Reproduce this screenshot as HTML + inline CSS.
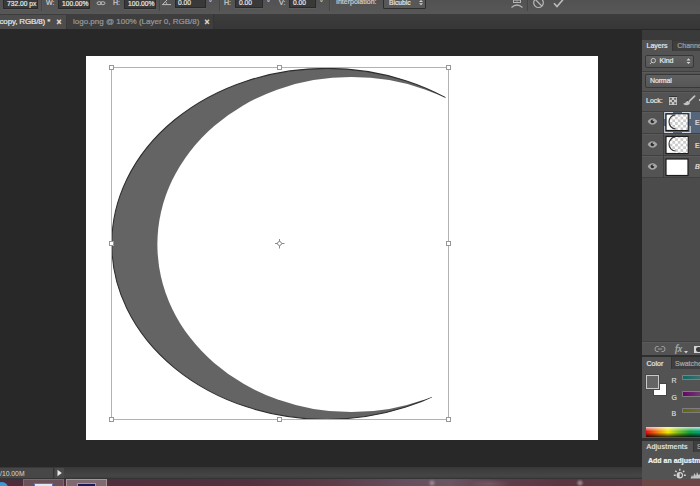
<!DOCTYPE html>
<html><head><meta charset="utf-8">
<style>
*{margin:0;padding:0;box-sizing:border-box}
html,body{width:700px;height:486px;overflow:hidden;background:#282828;font-family:"Liberation Sans",sans-serif;position:relative}
.a{position:absolute}
.t{position:absolute;white-space:nowrap;color:#e6e6e6;font-size:7px;line-height:7px;-webkit-text-stroke:0.2px currentColor}
.fld{position:absolute;top:-4px;height:12px;background:#393939;border:1px solid #2a2a2a;box-shadow:0 1px 0 #5c5c5c}
.sep{position:absolute;top:0;width:1px;height:11px;background:#454545;box-shadow:1px 0 0 #575757}
.hs{position:absolute;left:642px;width:58px;height:1px;background:#404040;box-shadow:0 1px 0 #5a5a5a}
.lab{color:#cfcfcf}
</style></head><body>
<!-- options bar -->
<div class="a" style="left:0;top:0;width:700px;height:14px;background:linear-gradient(#525252,#575757)"></div>
<div class="fld" style="left:3px;width:35px;top:-3px"></div>
<div class="t" style="left:7px;top:0.2px;font-size:6.7px">732.00 px</div>
<div class="sep" style="left:41px"></div>
<div class="t lab" style="left:46px;top:-1.5px">W:</div>
<div class="fld" style="left:58px;width:32px;top:-3px"></div>
<div class="t" style="left:62px;top:0.2px;font-size:6.7px">100.00%</div>
<svg class="a" style="left:96px;top:0" width="10" height="7" viewBox="0 0 10 7"><g fill="none" stroke="#c4c4c4" stroke-width="0.9"><ellipse cx="3.2" cy="3.2" rx="2.2" ry="1.5"/><ellipse cx="6.8" cy="3.2" rx="2.2" ry="1.5"/></g></svg>
<div class="t lab" style="left:113px;top:-1.5px">H:</div>
<div class="fld" style="left:124px;width:32px;top:-3px"></div>
<div class="t" style="left:128px;top:0.2px;font-size:6.7px">100.00%</div>
<div class="sep" style="left:159px"></div>
<svg class="a" style="left:161px;top:-1px" width="11" height="8" viewBox="0 0 11 8"><g fill="none" stroke="#bdbdbd" stroke-width="1"><path d="M1 5.6H10M1.5 5.6L6.5 0.5"/><path d="M4.5 2.8Q6 3.8 5.8 5.6" stroke-width="0.8"/></g></svg>
<div class="fld" style="left:175px;width:31px"></div>
<div class="t" style="left:178px;top:-0.8px;font-size:6.7px">0.00</div>
<div class="t lab" style="left:209px;top:-1.2px">°</div>
<div class="sep" style="left:219px"></div>
<div class="t lab" style="left:224px;top:-1.5px">H:</div>
<div class="fld" style="left:235px;width:28px"></div>
<div class="t" style="left:239px;top:-0.8px;font-size:6.7px">0.00</div>
<div class="t lab" style="left:267px;top:-1.2px">°</div>
<div class="t lab" style="left:279px;top:-1.5px">V:</div>
<div class="fld" style="left:289px;width:27px"></div>
<div class="t" style="left:293px;top:-0.8px;font-size:6.7px">0.00</div>
<div class="t lab" style="left:320px;top:-1.2px">°</div>
<div class="sep" style="left:329px"></div>
<div class="t lab" style="left:336px;top:-1.6px">Interpolation:</div>
<div class="a" style="left:383px;top:-3px;width:43px;height:12px;background:#585858;border:1px solid #2e2e2e;border-radius:1px"></div>
<div class="t" style="left:389px;top:-1.2px;font-size:6.7px">Bicubic</div>
<svg class="a" style="left:418px;top:-1px" width="6" height="8" viewBox="0 0 6 8"><g fill="#d0d0d0"><path d="M1 3H5L3 1z"/><path d="M1 4.3H5L3 6.3z"/></g></svg>
<svg class="a" style="left:509px;top:-2px" width="16" height="11" viewBox="0 0 16 11"><g fill="none" stroke="#b4b4b4" stroke-width="1"><rect x="4.5" y="0.5" width="7" height="4"/><path d="M8 0.5V4.5M4.5 2.5H11.5" stroke-width="0.6"/><path d="M2.5 9.5Q8 4.5 13.5 9.5" stroke-width="1.2"/></g></svg>
<div class="sep" style="left:527px"></div>
<svg class="a" style="left:532px;top:-3px" width="13" height="12" viewBox="0 0 13 12"><g fill="none" stroke="#b8b8b8" stroke-width="1.2"><circle cx="6.5" cy="5.7" r="4.8"/><path d="M3.2 2.4L9.8 9"/></g></svg>
<svg class="a" style="left:553px;top:-2px" width="12" height="10" viewBox="0 0 12 10"><path d="M1 5.3L4 8.6L10.5 1" fill="none" stroke="#bcbcbc" stroke-width="1.6"/></svg>
<!-- document tabs -->
<div class="a" style="left:0;top:14px;width:700px;height:15px;background:linear-gradient(#3d3d3d,#363636)"></div>
<div class="a" style="left:0;top:15px;width:66px;height:14px;background:#4d4d4d"></div>
<div class="t" style="left:-0.5px;top:18.4px;color:#e8e8e8;font-size:8px;line-height:8px;letter-spacing:-0.15px">copy, RGB/8) *</div>
<div class="t" style="left:56.6px;top:18.2px;color:#e8e8e8;font-size:8.5px;line-height:8px;font-weight:bold">&#215;</div>
<div class="a" style="left:67px;top:14px;width:147px;height:15px;background:#3e3e3e;border-right:1px solid #343434"></div>
<div class="t" style="left:73px;top:18.4px;color:#9a9a9a;font-size:8px;line-height:8px">logo.png @ 100% (Layer 0, RGB/8)</div>
<div class="t" style="left:204.6px;top:18.2px;color:#e0e0e0;font-size:8.5px;line-height:8px;font-weight:bold">&#215;</div>
<!-- canvas -->
<div class="a" style="left:86px;top:56px;width:512px;height:384px;background:#fff"></div>
<svg class="a" style="left:0;top:0" width="700" height="486" viewBox="0 0 700 486">
  <defs>
    <clipPath id="tipclip"><polygon points="0,0 445.5,0 445.5,98 432,397 432,486 0,486"/></clipPath>
    <mask id="innermask"><rect width="700" height="486" fill="#fff"/><ellipse cx="351.34" cy="244.5" rx="193.97" ry="167.6" fill="#000"/></mask>
  </defs>
  <g clip-path="url(#tipclip)"><ellipse cx="326.67" cy="243.9" rx="214.9" ry="175.55" fill="#646464" stroke="#2e2e2e" stroke-width="1.05" mask="url(#innermask)"/></g>
  <rect x="111.5" y="67.5" width="337" height="352" fill="none" stroke="#b2b2b2" stroke-width="1"/>
  <g fill="#fff" stroke="#979797" stroke-width="1">
    <rect x="109.5" y="65.5" width="4" height="4"/>
    <rect x="277.5" y="65.5" width="4" height="4"/>
    <rect x="446.5" y="65.5" width="4" height="4"/>
    <rect x="109.5" y="241.5" width="4" height="4"/>
    <rect x="446.5" y="241.5" width="4" height="4"/>
    <rect x="109.5" y="417.5" width="4" height="4"/>
    <rect x="277.5" y="417.5" width="4" height="4"/>
    <rect x="446.5" y="417.5" width="4" height="4"/>
  </g>
  <g stroke="#8a8a8a" stroke-width="1" fill="none">
    <circle cx="279.5" cy="243.5" r="2"/>
    <path d="M275 243.5h2.5M282 243.5h2.5M279.5 239v2.5M279.5 246v2.5"/>
  </g>
</svg>
<!-- right panel -->
<div class="a" style="left:642px;top:30px;width:58px;height:449px;background:#535353;border-top-left-radius:2px"></div>
<div class="a" style="left:642px;top:30px;width:58px;height:10px;background:#3a3a3a;border-top-left-radius:2px"></div>
<div class="a" style="left:672px;top:40px;width:28px;height:11px;background:#3f3f3f;border-left:1px solid #353535;box-shadow:inset 0 1px 0 #383838"></div>
<div class="t" style="left:646.5px;top:41.8px">Layers</div>
<div class="t" style="left:677.2px;top:41.8px;color:#a0a0a0">Channels</div>
<div class="a" style="left:645px;top:55px;width:49px;height:13px;background:linear-gradient(#606060,#575757);border:1px solid #383838;border-radius:2px"></div>
<svg class="a" style="left:648px;top:57px" width="9" height="9" viewBox="0 0 9 9"><g fill="none" stroke="#d0d0d0" stroke-width="0.9"><circle cx="5.3" cy="3.6" r="2.2"/><path d="M3.7 5.2L1.8 7.1"/></g></svg>
<div class="t" style="left:659.5px;top:57.4px">Kind</div>
<svg class="a" style="left:685px;top:57px" width="7" height="9" viewBox="0 0 7 9"><g fill="#d6d6d6"><path d="M1.5 3.4H5.5L3.5 1.2z"/><path d="M1.5 4.9H5.5L3.5 7.1z"/></g></svg>
<div class="hs" style="top:71px"></div>
<div class="a" style="left:645px;top:74px;width:60px;height:14px;background:linear-gradient(#606060,#565656);border:1px solid #383838;border-radius:2px"></div>
<div class="t" style="left:650px;top:77.1px;letter-spacing:-0.15px">Normal</div>
<div class="hs" style="top:91px"></div>
<div class="t" style="left:646px;top:97.4px">Lock:</div>
<svg class="a" style="left:669px;top:96px" width="8" height="9" viewBox="0 0 8 9"><rect x="0" y="0" width="8" height="0.8" fill="#2c2c2c"/><rect x="0" y="1" width="8" height="8" fill="#c6c6c6"/><g fill="#656565"><rect x="0.8" y="1.8" width="2" height="2"/><rect x="5.2" y="1.8" width="2" height="2"/><rect x="3" y="4" width="2" height="2"/><rect x="0.8" y="6.2" width="2" height="2"/><rect x="5.2" y="6.2" width="2" height="2"/></g></svg>
<svg class="a" style="left:682px;top:95px" width="14" height="11" viewBox="0 0 14 11"><path d="M7.4 6.2L12.6 1.1" stroke="#c4c4c4" stroke-width="1.7" stroke-linecap="round"/><path d="M1 8.7Q3.5 8.5 5.3 5.8L8.2 7.8Q7.5 10.2 5 10.2Q2.5 10.2 1 8.7z" fill="#c4c4c4"/><path d="M4.6 5.2L6.6 4.9" stroke="#333" stroke-width="0.8"/></svg>
<div class="a" style="left:698.5px;top:99.3px;width:1.5px;height:1.6px;background:#b8b8b8"></div>
<div class="hs" style="top:111px"></div>
<div class="hs" style="top:133px"></div>
<div class="hs" style="top:155px"></div>
<div class="hs" style="top:177px"></div>
<div class="a" style="left:664px;top:112px;width:36px;height:21px;background:#566579"></div>
<div class="a" style="left:663px;top:112px;width:1px;height:65px;background:#3e3e3e"></div>
<!-- eyes -->
<svg class="a" style="left:647px;top:117.3px" width="11" height="9" viewBox="0 0 11 9"><path d="M0.7 4.3C2.4 -0.2 8.6 -0.2 10.3 4.3C8.6 8.8 2.4 8.8 0.7 4.3z" fill="#a6a6a6"/><path d="M1.2 3.3C3 0 8 0 9.8 3.3" fill="none" stroke="#474747" stroke-width="0.5"/><circle cx="5.4" cy="4.4" r="1.8" fill="#2c2c2c"/><circle cx="6.3" cy="3.6" r="0.6" fill="#d8d8d8"/></svg>
<svg class="a" style="left:647px;top:139.5px" width="11" height="9" viewBox="0 0 11 9"><path d="M0.7 4.3C2.4 -0.2 8.6 -0.2 10.3 4.3C8.6 8.8 2.4 8.8 0.7 4.3z" fill="#a6a6a6"/><path d="M1.2 3.3C3 0 8 0 9.8 3.3" fill="none" stroke="#474747" stroke-width="0.5"/><circle cx="5.4" cy="4.4" r="1.8" fill="#2c2c2c"/><circle cx="6.3" cy="3.6" r="0.6" fill="#d8d8d8"/></svg>
<svg class="a" style="left:647px;top:161.7px" width="11" height="9" viewBox="0 0 11 9"><path d="M0.7 4.3C2.4 -0.2 8.6 -0.2 10.3 4.3C8.6 8.8 2.4 8.8 0.7 4.3z" fill="#a6a6a6"/><path d="M1.2 3.3C3 0 8 0 9.8 3.3" fill="none" stroke="#474747" stroke-width="0.5"/><circle cx="5.4" cy="4.4" r="1.8" fill="#2c2c2c"/><circle cx="6.3" cy="3.6" r="0.6" fill="#d8d8d8"/></svg>
<!-- thumbnails -->
<svg class="a" style="left:664px;top:111px" width="36" height="66" viewBox="0 0 36 66">
  <defs>
    <pattern id="chk" width="5.4" height="5.4" patternUnits="userSpaceOnUse" x="3" y="3"><rect width="5.4" height="5.4" fill="#fff"/><rect width="2.7" height="2.7" fill="#cacaca"/><rect x="2.7" y="2.7" width="2.7" height="2.7" fill="#cacaca"/></pattern>
    <clipPath id="th1"><rect x="2.5" y="3.5" width="21" height="15.5"/></clipPath>
    <clipPath id="th2"><rect x="2.5" y="26" width="21" height="16"/></clipPath>
  </defs>
  <g fill="none" stroke="#d3d9e2" stroke-width="1.1"><path d="M0.8 8V1.5H9M18 1.5H26.2V8M26.2 15V21.5H18M9 21.5H0.8V15"/></g>
  <rect x="2" y="3" width="22" height="16.5" fill="#fff" stroke="#1c1c1c" stroke-width="1.2"/>
  <g clip-path="url(#th1)"><path d="M11.5 3V3.8A6.5 7 0 0 0 11.5 17.8V20H24V3z" fill="url(#chk)"/><path d="M11.5 3.8A6.5 7 0 0 0 11.5 17.8" fill="none" stroke="#3c3c3c" stroke-width="1.2"/></g>
  <rect x="2" y="25.5" width="22" height="17" fill="#fff" stroke="#1c1c1c" stroke-width="1.2"/>
  <g clip-path="url(#th2)"><path d="M11.5 25V26A6.5 7 0 0 0 11.5 40V43H24V25z" fill="url(#chk)"/><path d="M11.5 26A6.5 7 0 0 0 11.5 40" fill="none" stroke="#3c3c3c" stroke-width="1.2"/></g>
  <rect x="2" y="48" width="22" height="16.5" fill="#fff" stroke="#1c1c1c" stroke-width="1.2"/>
</svg>
<div class="t" style="left:695px;top:119.2px">E</div>
<div class="t" style="left:695px;top:141.9px">E</div>
<div class="t" style="left:695px;top:163.2px;font-style:italic">B</div>
<div class="a" style="left:642px;top:178px;width:58px;height:163px;background:#4b4b4b"></div>
<div class="hs" style="top:341px"></div>
<svg class="a" style="left:654px;top:345px" width="12" height="8" viewBox="0 0 12 8"><g fill="none" stroke="#a8a8a8" stroke-width="0.9"><path d="M4.5 1.5H3Q1 1.5 1 4Q1 6.5 3 6.5H4.5M7.5 1.5H9Q11 1.5 11 4Q11 6.5 9 6.5H7.5M3.8 4H8.2"/></g></svg>
<div class="t" style="left:675px;top:344px;font-family:'Liberation Serif',serif;font-style:italic;font-size:10px;line-height:10px;color:#b8b8b8">fx</div>
<svg class="a" style="left:684px;top:351px" width="4" height="3" viewBox="0 0 4 3"><path d="M0 0H4L2 2.5z" fill="#cfcfcf"/></svg>
<div class="a" style="left:694px;top:345.5px;width:8px;height:7.5px;background:#d4d4d4"></div><div class="a" style="left:696px;top:347px;width:5px;height:4.5px;border-radius:50%;background:#3a3a3a"></div>
<div class="a" style="left:642px;top:354.6px;width:58px;height:2.6px;background:#2f2f2f"></div>
<div class="a" style="left:670.5px;top:357px;width:30px;height:11.5px;background:#3f3f3f;border-left:1px solid #353535"></div>
<div class="t" style="left:646.5px;top:360px">Color</div>
<div class="t" style="left:675px;top:360px;color:#a8a8a8">Swatches</div>
<!-- swatches -->
<div class="a" style="left:652.5px;top:382.5px;width:14px;height:13.5px;background:#fff;border:1px solid #444"></div>
<div class="a" style="left:645px;top:374px;width:15px;height:16px;background:#646464;border:1px solid #484848;box-shadow:inset 0 0 0 1px #c9c9c9"></div>
<div class="t" style="left:671.5px;top:377.2px;color:#d8d8d8">R</div>
<div class="t" style="left:671.5px;top:394px;color:#d8d8d8">G</div>
<div class="t" style="left:671.5px;top:410.4px;color:#d8d8d8">B</div>
<div class="a" style="left:683px;top:375.5px;width:20px;height:3.6px;background:linear-gradient(90deg,#0c6a66,#2f6f6c 60%,#4f6a69);box-shadow:0 0 0 0.8px #8a8a8a"></div>
<div class="a" style="left:683px;top:392.3px;width:20px;height:3.4px;background:linear-gradient(90deg,#680468,#6d2a6d 60%,#6a4a6a);box-shadow:0 0 0 0.8px #8a8a8a"></div>
<div class="a" style="left:683px;top:408.9px;width:20px;height:3.4px;background:linear-gradient(90deg,#666604,#6a6a2c 60%,#6a6a4a);box-shadow:0 0 0 0.8px #8a8a8a"></div>
<div class="a" style="left:646px;top:427px;width:54px;height:10px;background:linear-gradient(90deg,#e01010 0px,#f07a10 11px,#f4e800 22px,#7cc020 32px,#10a040 44px,#00a088 56px)"></div>
<div class="a" style="left:646px;top:427px;width:54px;height:10px;background:linear-gradient(180deg,rgba(255,255,255,0.75) 0%,rgba(255,255,255,0) 45%,rgba(0,0,0,0) 55%,rgba(0,0,0,0.8) 100%)"></div>
<div class="a" style="left:642px;top:438px;width:58px;height:3px;background:#2f2f2f"></div>
<div class="a" style="left:693px;top:441px;width:7px;height:11px;background:#3f3f3f;border-left:1px solid #353535"></div>
<div class="t" style="left:646.5px;top:443px;letter-spacing:0.25px">Adjustments</div>
<div class="t" style="left:697px;top:443px;color:#a8a8a8">S</div>
<div class="t" style="left:648px;top:457px;font-weight:bold;color:#f2f2f2">Add an adjustment</div>
<svg class="a" style="left:673px;top:468px" width="14" height="14" viewBox="0 0 14 14"><g stroke="#d4d4d4" stroke-width="1.4" fill="none"><circle cx="6.8" cy="7.2" r="2.5"/><path d="M6.8 0.8V2.8M0.8 7.3H2.8M10.8 7.3H12.8M2.3 2.8L3.6 4.1M11.3 2.8L10 4.1"/></g><path d="M6.8 4.7A2.5 2.5 0 0 0 6.8 9.7z" fill="#d4d4d4"/><path d="M6.8 5.2A2 2 0 0 1 6.8 9.2z" fill="#555"/></svg>
<svg class="a" style="left:690px;top:470px" width="10" height="9" viewBox="0 0 10 9"><path d="M0.5 8.5L2 5L3 7L4.5 3L6 6L7 2L8.5 5L10 4V8.5z" fill="#c4c4c4"/></svg>
<!-- status bar -->
<div class="a" style="left:0;top:467px;width:642px;height:12px;background:linear-gradient(#383838,#454545 70%,#404040 88%,#2e2e2e 100%)"></div>
<div class="a" style="left:0;top:468px;width:54px;height:10px;background:#474747;border-right:1px solid #333"></div>
<div class="t" style="left:0px;top:470.2px;color:#d8d8d8;-webkit-text-stroke:0;font-size:6.8px">/10.00M</div>
<div class="a" style="left:55px;top:468px;width:9px;height:10px;background:#4a4a4a"></div>
<svg class="a" style="left:56px;top:469px" width="7" height="8" viewBox="0 0 7 8"><path d="M1.5 0.8L5.8 4L1.5 7.2z" fill="#e8e8e8"/></svg>
<!-- taskbar -->
<div class="a" style="left:0;top:478.6px;width:642px;height:8px;background:linear-gradient(90deg,#4c2b3b 0px,#53323f 250px,#5b3c47 330px,#665060 410px,#6a5563 450px,#5e3f4c 495px,#5a3541 560px,#5b3a45 642px)"></div>
<div class="a" style="left:420px;top:478px;width:40px;height:8px;background:radial-gradient(circle at 12px 5px,rgba(255,255,255,0.35) 0,rgba(255,255,255,0) 4px)"></div>
<div class="a" style="left:560px;top:478px;width:40px;height:8px;background:radial-gradient(circle at 20px 5px,rgba(255,255,255,0.45) 0,rgba(255,255,255,0) 4px)"></div>
<div class="a" style="left:470px;top:478px;width:50px;height:8px;background:radial-gradient(ellipse 20px 5px at 20px 6px,rgba(255,255,255,0.12) 0,rgba(255,255,255,0) 100%)"></div>
<div class="a" style="left:642px;top:478.5px;width:58px;height:8px;background:#6b4747"></div>
<div class="a" style="left:-4px;top:482px;width:12px;height:12px;border-radius:6px;background:#3a9ad6"></div>
<div class="a" style="left:23px;top:479px;width:41px;height:8px;background:#6a5058;border:1px solid #7d6a70"></div>
<div class="a" style="left:34px;top:483px;width:19px;height:5px;background:#e0e8f0;border:1px solid #4a7fd0"></div>
<div class="a" style="left:66px;top:478.5px;width:41px;height:8px;background:#7e6a70;border:1px solid #a5959a"></div>
<div class="a" style="left:77px;top:483px;width:19px;height:5px;background:#1a1a5a;border:1px solid #6aa8e8"></div>
</body></html>
